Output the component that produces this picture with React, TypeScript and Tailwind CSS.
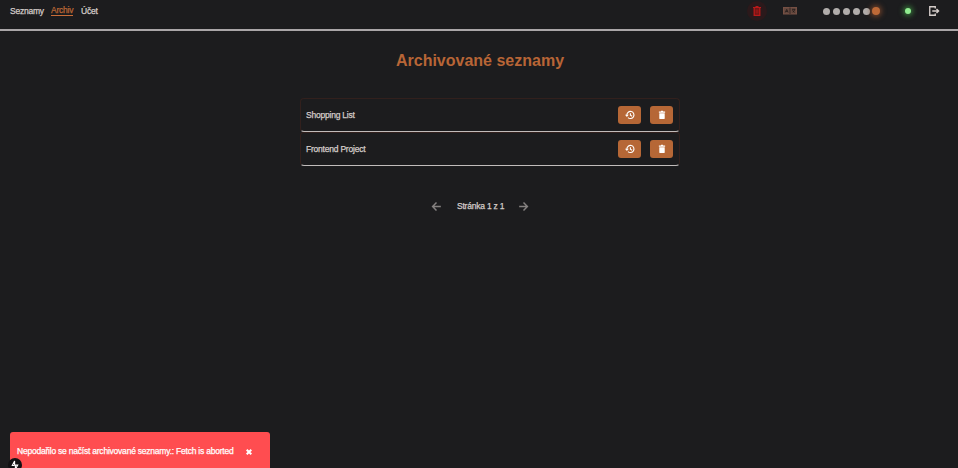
import React from "react";

const lists = ["Shopping List", "Frontend Project"];
const dots = [0, 1, 2, 3, 4];

function HeaderTrash() {
  return (
    <svg width="8" height="10" viewBox="0 0 8 10" fill="none" stroke="#b91919">
      <path d="M0 1.5h8M2.5 .5h3" strokeWidth="1.2" />
      <path d="M1.2 2v7.3h5.6V2" strokeWidth="1.3" fill="#6d1616" />
      <path d="M3.2 3.5v4M4.8 3.5v4" strokeWidth=".7" />
    </svg>
  );
}

function Translate() {
  return (
    <svg width="14" height="8" viewBox="0 0 14 8" fill="none">
      <rect x=".5" y=".5" width="13" height="6.5" fill="#66493f" stroke="#765044" />
      <path d="M7 .5v6.5" stroke="#221b1a" strokeWidth=".7" />
      <path d="M2.3 5.4l1.4-3 1.4 3M2.9 4.4h1.6M9 2.3h3L10 5.4M9.3 3.5l2.3 1.9" stroke="#251d1c" strokeWidth=".9" />
    </svg>
  );
}

function Logout() {
  return (
    <svg className="ml-[17px]" width="12" height="12" viewBox="0 0 24 24" fill="none" stroke="#d5cdca" strokeWidth="2.7">
      <path d="M14.5 7V3.5H3.5v17h11V17M8.5 12H20M17 7.8l4.2 4.2-4.2 4.2" />
    </svg>
  );
}

function History() {
  return (
    <svg width="10" height="10" viewBox="0 0 24 24" fill="none" stroke="white" strokeWidth="2.7">
      <path d="M4.5 12a8.5 8.5 0 1 1 2.6 6.1M13 7.5v5l4 2.3" />
      <path d="M0 11.5h9L4.5 16.5z" fill="white" stroke="none" />
    </svg>
  );
}

function Trash() {
  return (
    <svg width="10" height="10" viewBox="0 0 24 24" fill="white">
      <path d="M5.5 8h13v11.5a2.2 2.2 0 0 1-2.2 2.2H7.7a2.2 2.2 0 0 1-2.2-2.2zM4.5 3.5H9l1-1.5h4l1 1.5h4.5v3.2h-15z" />
    </svg>
  );
}

function Arrow({ forward = false }: { forward?: boolean }) {
  return (
    <svg width="13" height="13" viewBox="0 0 24 24" fill="none" stroke="#858180" strokeWidth="2.7">
      <path d={forward ? "M4 12h15M12 4.8l7.2 7.2-7.2 7.2" : "M20 12H5M12 4.8L4.8 12l7.2 7.2"} />
    </svg>
  );
}

export default function App() {
  return (
    <div className="relative flex h-[468px] w-[958px] flex-col overflow-hidden bg-[#1c1c1e] font-['Liberation_Sans',Arial,sans-serif] text-[8.5px] tracking-[-0.22px] text-[#d5cdca] [-webkit-text-stroke:0.25px_currentColor]">
      <header className="flex h-[31px] shrink-0 items-start justify-between border-b-2 border-[#aaa6a8] pl-[10px] pr-[18px]">
        <nav className="flex gap-[7px] pt-[5px] leading-[12px]">
          <a className="w-[34px] whitespace-nowrap">Seznamy</a>
          <a className="h-[11px] w-[22px] border-b border-[#c96d38] leading-[11px] text-[#b96736]">Archiv</a>
          <a className="pl-px">Účet</a>
        </nav>
        <div className="flex h-[22px] items-center">
          <button className="flex size-[20px] items-center justify-center rounded-full bg-[#2b191b]"><HeaderTrash /></button>
          <div className="ml-4"><Translate /></div>
          <div className="ml-[26px] flex items-center gap-[3px]">
            {dots.map((d) => <span key={d} className="size-[7px] rounded-full bg-[#b1adab]" />)}
          </div>
          <span className="ml-[2px] size-[8px] rounded-full bg-[#bd6937] shadow-[0_0_5px_2px_#90502eb0]" />
          <span className="ml-[25px] size-[6px] rounded-full bg-[#90ee90] shadow-[0_0_5px_2px_#419b45b0]" />
          <Logout />
        </div>
      </header>

      <main className="flex flex-col items-center">
        <h1 className="mt-[20px] pl-[2px] text-[16px] font-bold leading-5 tracking-normal text-[#b86536] [-webkit-text-stroke:0]">Archivované seznamy</h1>
        <ul className="ml-[22px] mt-[27px] w-[380px]">
          {lists.map((name) => (
            <li key={name} className="flex h-[34px] items-center justify-between rounded-[4px] border border-[#32201d] border-b-[#c1bcbb] pl-[5px] pr-[6px]">
              <span>{name}</span>
              <div className="flex gap-[9px]">
                <button className="flex h-[18px] w-[23px] items-center justify-center rounded-[3px] bg-[#b66736]"><History /></button>
                <button className="flex h-[18px] w-[23px] items-center justify-center rounded-[3px] bg-[#b66736]"><Trash /></button>
              </div>
            </li>
          ))}
        </ul>
        <div className="ml-[2px] mt-[34px] flex items-center gap-[14px]">
          <Arrow />
          <span className="w-[46px] whitespace-nowrap">Stránka 1 z 1</span>
          <Arrow forward />
        </div>
      </main>

      <div className="absolute bottom-0 left-[10px] flex h-[36px] w-[260px] items-center justify-between rounded-t-[3px] bg-[#ff4d50] pl-[7px] pr-[18px] pt-[3px] text-white">
        <span>Nepodařilo se načíst archivované seznamy.: Fetch is aborted</span>
        <svg width="6" height="6" viewBox="0 0 6 6" stroke="white" strokeWidth="2"><path d="M.7.7l4.6 4.6M5.3.7L.7 5.3" /></svg>
      </div>
      <div className="absolute left-[8px] top-[458px] flex size-[14px] items-center justify-center rounded-full bg-[#111113]">
        <svg width="8" height="10" viewBox="0 0 8 10" fill="none" stroke="#fff" strokeWidth="1.1"><path d="M3.2 5.5H1.3L3.6 1v4.1h3.1L4.4 9.2V5.1" /></svg>
      </div>
    </div>
  );
}
